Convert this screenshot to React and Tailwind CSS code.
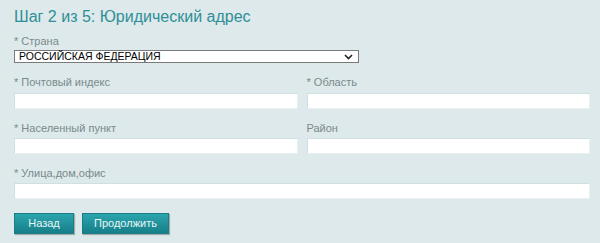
export default function App() {
  const font = { fontFamily: '"Liberation Sans", Arial, sans-serif' };
  const Label = ({ children }) => (
    <div className="h-[14px] text-[11px] leading-[14px] text-[#7a8a8c]">{children}</div>
  );
  const Input = () => (
    <div className="h-[16px] bg-white border border-[#cfe0e2] border-r-[#e8f0f1] border-b-[#e8f0f1]" />
  );
  return (
    <div className="w-[600px] h-[243px] bg-[#dde9ea] pl-[14px] pr-[10px] pt-[7px]" style={font}>
      <div className="h-[20px] text-[16px] leading-[20px] text-[#2f8f98]">Шаг 2 из 5: Юридический адрес</div>
      <div className="mt-[7px]">
        <Label>* Страна</Label>
        <div className="mt-[2px] w-[345px] h-[13px] bg-white border border-[#7a7a7a] flex items-center justify-between pl-[4px] pr-[4px]">
          <span className="text-[10.5px] leading-[11px] text-black">РОССИЙСКАЯ ФЕДЕРАЦИЯ</span>
          <svg width="9" height="6" viewBox="0 0 9 6" className="mr-[1px]">
            <path d="M1 1 L4.5 4.5 L8 1" fill="none" stroke="#222" strokeWidth="1.6" />
          </svg>
        </div>
      </div>
      <div className="mt-[12px] grid grid-cols-2 gap-x-[9px]">
        <div>
          <Label>* Почтовый индекс</Label>
          <div className="mt-[4px]"><Input /></div>
        </div>
        <div>
          <Label>* Область</Label>
          <div className="mt-[4px]"><Input /></div>
        </div>
      </div>
      <div className="mt-[12px] grid grid-cols-2 gap-x-[9px]">
        <div>
          <Label>* Населенный пункт</Label>
          <div className="mt-[3px]"><Input /></div>
        </div>
        <div>
          <Label>Район</Label>
          <div className="mt-[3px]"><Input /></div>
        </div>
      </div>
      <div className="mt-[12px]">
        <Label>* Улица,дом,офис</Label>
        <div className="mt-[3px]"><Input /></div>
      </div>
      <div className="mt-[14px] flex gap-[8px]">
        <button className="w-[60px] h-[21px] text-[11px] text-[#e6f6f6] bg-gradient-to-b from-[#2ba5ad] to-[#177f89] border border-[#1a7c85] shadow-[1px_1px_1px_rgba(0,0,0,0.25)]">Назад</button>
        <button className="w-[87px] h-[21px] text-[11px] text-[#e6f6f6] bg-gradient-to-b from-[#2ba5ad] to-[#177f89] border border-[#1a7c85] shadow-[1px_1px_1px_rgba(0,0,0,0.25)]">Продолжить</button>
      </div>
    </div>
  );
}
